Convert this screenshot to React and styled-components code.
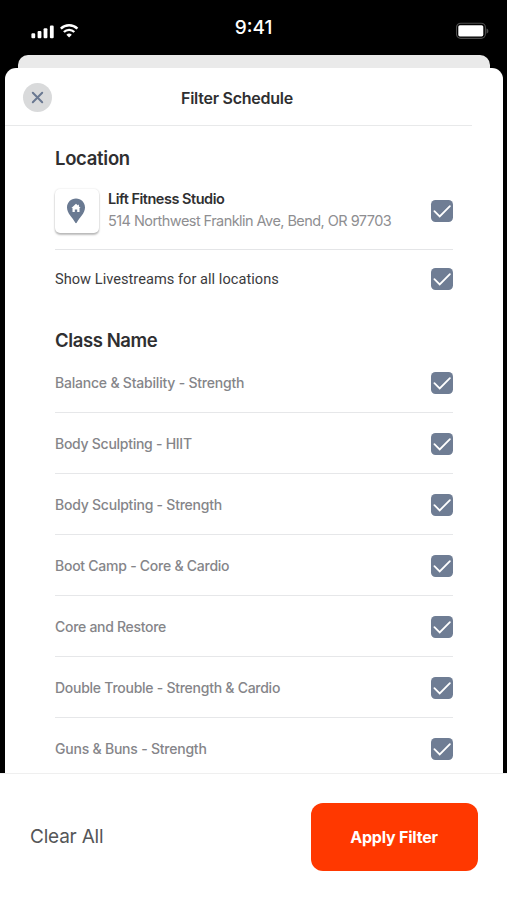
import React from "react";
import styled, { createGlobalStyle } from "styled-components";

const GlobalStyle = createGlobalStyle`
  *, *::before, *::after { box-sizing: border-box; }
  body { margin: 0; background: #000; }
  button { font: inherit; border: 0; padding: 0; background: none; cursor: pointer; }
`;

const Screen = styled.div`
  width: 507px;
  height: 900px;
  display: flex;
  flex-direction: column;
  overflow: hidden;
  background: #000;
  color: #2f2f31;
  font-family: Inter, "Liberation Sans", sans-serif;
`;

const StatusBar = styled.header`
  height: 55px;
  flex: none;
  display: grid;
  grid-template-columns: 1fr auto 1fr;
  padding: 0 18px 0 31px;
  color: #fff;
`;

const Signals = styled.div`
  display: flex;
  align-items: flex-start;
  gap: 6px;
  padding-top: 23px;
`;

const Time = styled.time`
  padding-top: 16px;
  margin-right: 13px;
  font-size: 19px;
  line-height: 23px;
  font-weight: 500;
  letter-spacing: 0;
`;

const Battery = styled.div`
  display: flex;
  justify-content: flex-end;
  padding-top: 22px;
`;

const BackSheet = styled.div`
  flex: none;
  height: 13px;
  margin: 0 17px 0 18px;
  border-radius: 10px 10px 0 0;
  background: #eaeaea;
`;

const Sheet = styled.main`
  flex: none;
  height: 705px;
  margin: 0 4px 0 5px;
  border-radius: 11px 11px 0 0;
  background: #fff;
  overflow: hidden;
`;

const SheetHeader = styled.div`
  height: 58px;
  width: 467px;
  display: grid;
  grid-template-columns: 30px 1fr 30px;
  align-items: center;
  padding: 2px 21px 0 18px;
  border-bottom: 1px solid #e8e9ea;
`;

const CloseButton = styled.button`
  width: 29px;
  height: 29px;
  display: flex;
  align-items: center;
  justify-content: center;
  border-radius: 50%;
  background: #d9dadb;
`;

const Title = styled.h1`
  margin: 0;
  text-align: center;
  font-size: 16px;
  line-height: 20px;
  font-weight: 600;
  letter-spacing: -0.25px;
`;

const Content = styled.div`
  padding: 20px 50px 0;
`;

const SectionTitle = styled.h2`
  margin: 0;
  height: 24px;
  font-size: 18.5px;
  line-height: 24px;
  font-weight: 600;
  letter-spacing: ${(p) => p.$tracking}px;
`;

const LocationRow = styled.div`
  height: 80px;
  display: flex;
  align-items: center;
  padding-top: 2px;
  border-bottom: 1px solid #e4e5e7;
`;

const LocationTile = styled.div`
  width: 44px;
  height: 44px;
  flex: none;
  display: flex;
  align-items: center;
  justify-content: center;
  border-radius: 5px;
  background: #fff;
  box-shadow: 0 2px 2px rgba(0, 0, 0, 0.25), 0 0 2px rgba(0, 0, 0, 0.14);
`;

const LocationText = styled.div`
  flex: 1;
  margin: -1px 0 0 9px;
  white-space: nowrap;
`;

const LocationName = styled.div`
  font-size: 14.5px;
  line-height: 22px;
  font-weight: 600;
  letter-spacing: -0.48px;
`;

const Address = styled.div`
  font-size: 14.5px;
  line-height: 22px;
  letter-spacing: -0.55px;
  color: #8e8e91;
`;

const ToggleRow = styled.div`
  height: 57px;
  display: flex;
  align-items: center;
  justify-content: space-between;
  color: #3b3b3d;
  font-family: Roboto, sans-serif;
  font-size: 14.6px;
  line-height: 20px;
  letter-spacing: 0.03px;
`;

const ClassSection = styled.section`
  padding-top: 21px;
`;

const ClassList = styled.ul`
  margin: 0;
  padding: 0;
  list-style: none;
`;

const ClassRow = styled.li`
  height: 61px;
  display: flex;
  align-items: center;
  justify-content: space-between;
  padding-top: 1px;
  border-bottom: 1px solid #e6e7e9;
  color: #858589;
  font-size: 14px;
  line-height: 18px;
  font-weight: 500;
  letter-spacing: ${(p) => p.$tracking}px;
  white-space: nowrap;

  &:last-child { border-bottom-color: transparent; }
`;

const Check = styled.span`
  width: 22px;
  height: 22px;
  flex: none;
  display: flex;
  align-items: center;
  justify-content: center;
  border-radius: 4.5px;
  background: #6f7d94;
`;

const Footer = styled.footer`
  flex: 1;
  display: flex;
  align-items: flex-start;
  justify-content: space-between;
  padding: 28.5px 29.5px 0 30px;
  border-top: 1px solid #efefef;
  background: #fff;
`;

const ClearButton = styled.button`
  height: 69px;
  color: #555658;
  font-size: 19px;
  line-height: 24px;
  letter-spacing: -0.2px;
`;

const ApplyButton = styled.button`
  width: 167px;
  height: 68.5px;
  border-radius: 12px;
  background: #ff3800;
  color: #fff;
  font-size: 16px;
  font-weight: 700;
  letter-spacing: -0.2px;
`;

const classes = [
  ["Balance & Stability - Strength", -0.21],
  ["Body Sculpting - HIIT", -0.27],
  ["Body Sculpting - Strength", -0.23],
  ["Boot Camp - Core & Cardio", -0.25],
  ["Core and Restore", -0.29],
  ["Double Trouble - Strength & Cardio", -0.26],
  ["Guns & Buns - Strength", -0.22],
];

const CheckBox = () => (
  <Check role="checkbox" aria-checked="true">
    <svg width="22" height="22" viewBox="0 0 22 22" fill="none">
      <path d="M3.4 11.2 8.7 16.4 18.9 6.1" stroke="#fff" strokeWidth="1.8" strokeLinecap="round" />
    </svg>
  </Check>
);

const CellularIcon = () => (
  <svg width="23" height="16" viewBox="0 0 23 16" fill="#fff">
    <rect x="0.4" y="10.3" width="3.8" height="5" rx="1.1" />
    <rect x="6.6" y="8" width="3.8" height="7.3" rx="1.1" />
    <rect x="12.6" y="5.2" width="3.8" height="10.1" rx="1.1" />
    <rect x="18.9" y="2.6" width="3.8" height="12.7" rx="1.1" />
  </svg>
);

const WifiIcon = () => (
  <svg width="19" height="15" viewBox="0 0 19 15" fill="none">
    <path d="M0.8 5.6a12 12 0 0 1 16.6 0" stroke="#fff" strokeWidth="2.5" />
    <path d="M3.9 9a7.3 7.3 0 0 1 10.4 0" stroke="#fff" strokeWidth="2.3" />
    <path d="M9.1 14.400 6.400 11.800a4 4 0 0 1 5.400 0z" fill="#fff" />
  </svg>
);

const BatteryIcon = () => (
  <svg width="33" height="18" viewBox="0 0 33 18">
    <rect x="0.5" y="1.2" width="28.9" height="15.2" rx="4.3" fill="none" stroke="#4c4c4c" strokeWidth="1.1" />
    <rect x="2.3" y="3.2" width="25" height="11.2" rx="1.6" fill="#fff" />
    <path d="M30.5 6.5v5.2c1.6-.7 1.9-1.7 1.9-2.6s-.3-1.9-1.9-2.6z" fill="#4c4c4c" />
  </svg>
);

const PinIcon = () => (
  <svg width="20" height="26" viewBox="0 0 20 26">
    <path d="M9 .6C3.900.600 0 4.500 0 9.500c0 5.900 5.300 9.600 8.300 15.300.3.600 1.100.600 1.400 0 3-5.700 8.300-9.400 8.300-15.300C18 4.500 14.100.600 9 .600z" fill="#6a7a92" />
    <path d="M9 5.800 4.400 10h1.100v4h2.300v-2.600h2.400V14h2.300v-4h1.100l-1.700-1.600V6.700h-1v.8z" fill="#fff" />
  </svg>
);

const CloseIcon = () => (
  <svg width="13" height="13" viewBox="0 0 13 13">
    <path d="M1.8 1.8 11.2 11.2M11.2 1.8 1.8 11.2" stroke="#6a7891" strokeWidth="2" strokeLinecap="round" />
  </svg>
);

export default function App() {
  return (
    <Screen>
      <GlobalStyle />
      <StatusBar>
        <Signals>
          <CellularIcon />
          <WifiIcon />
        </Signals>
        <Time>9:41</Time>
        <Battery>
          <BatteryIcon />
        </Battery>
      </StatusBar>
      <BackSheet />
      <Sheet>
        <SheetHeader>
          <CloseButton aria-label="Close">
            <CloseIcon />
          </CloseButton>
          <Title>Filter Schedule</Title>
        </SheetHeader>
        <Content>
          <SectionTitle $tracking={-0.3}>Location</SectionTitle>
          <LocationRow>
            <LocationTile>
              <PinIcon />
            </LocationTile>
            <LocationText>
              <LocationName>Lift Fitness Studio</LocationName>
              <Address>514 Northwest Franklin Ave, Bend, OR 97703</Address>
            </LocationText>
            <CheckBox />
          </LocationRow>
          <ToggleRow>
            <span>Show Livestreams for all locations</span>
            <CheckBox />
          </ToggleRow>
          <ClassSection>
            <SectionTitle $tracking={-0.4}>Class Name</SectionTitle>
            <ClassList>
              {classes.map(([name, tracking]) => (
                <ClassRow key={name} $tracking={tracking}>
                  <span>{name}</span>
                  <CheckBox />
                </ClassRow>
              ))}
            </ClassList>
          </ClassSection>
        </Content>
      </Sheet>
      <Footer>
        <ClearButton>Clear All</ClearButton>
        <ApplyButton>Apply Filter</ApplyButton>
      </Footer>
    </Screen>
  );
}
